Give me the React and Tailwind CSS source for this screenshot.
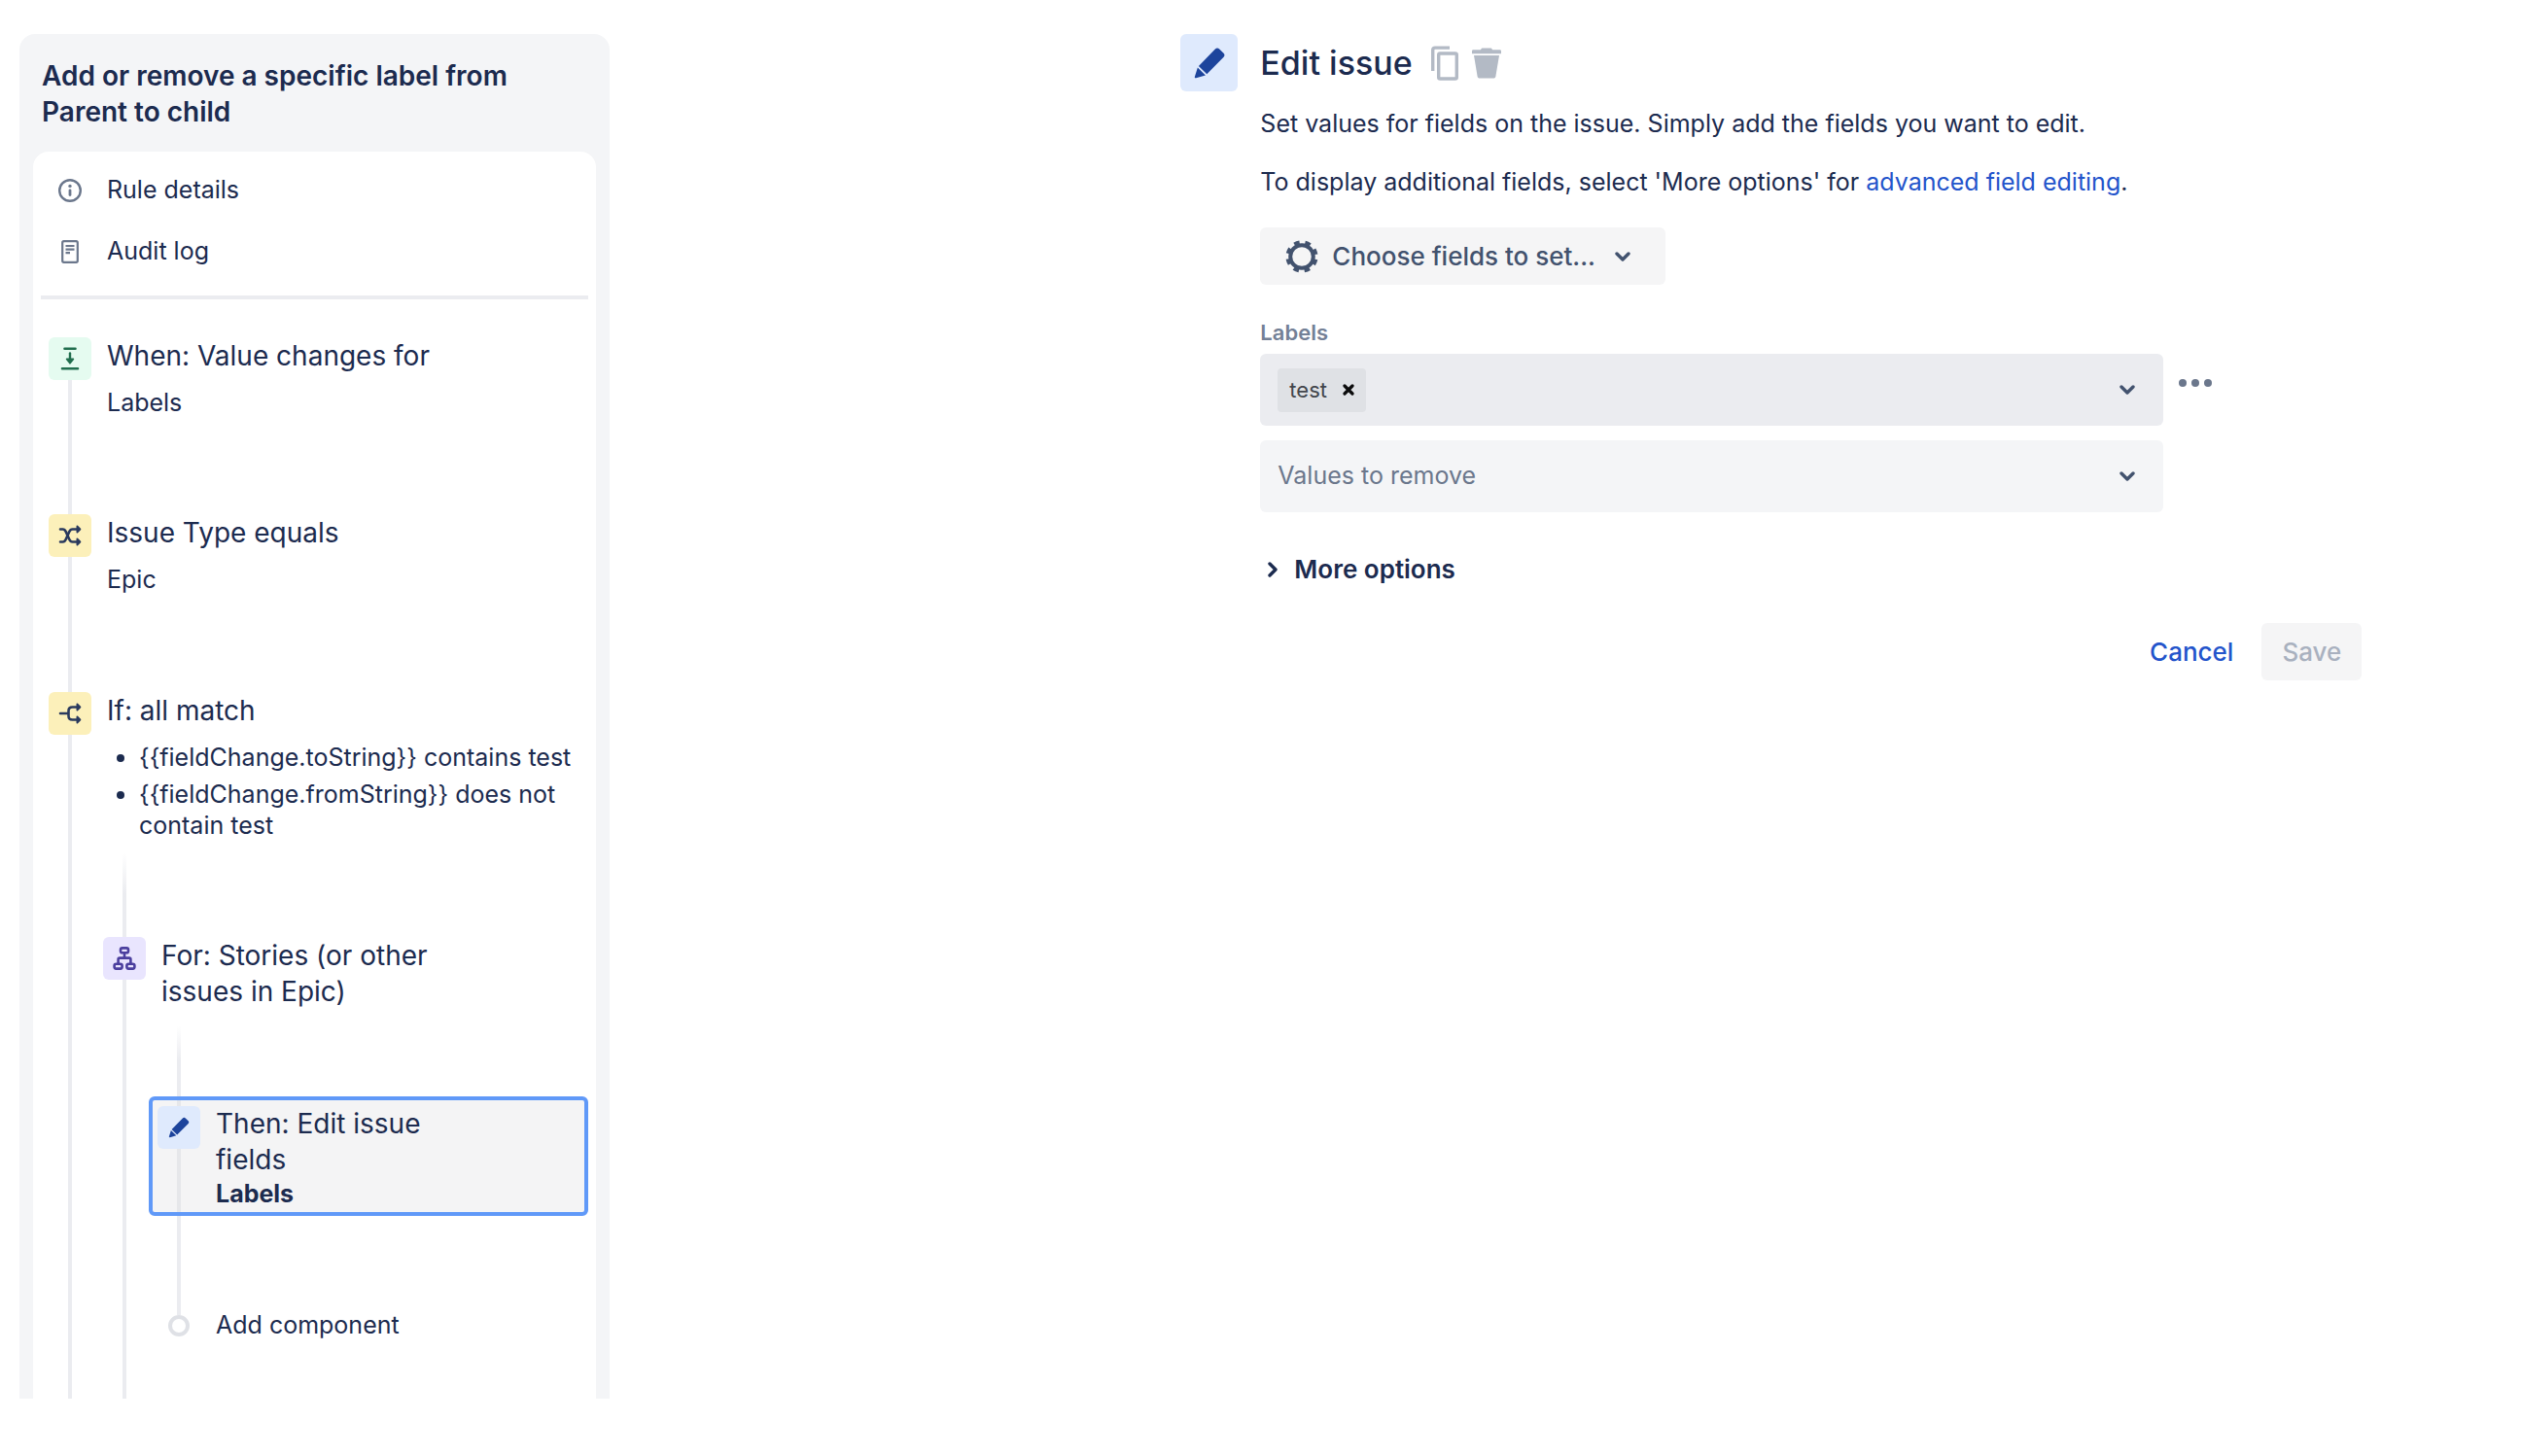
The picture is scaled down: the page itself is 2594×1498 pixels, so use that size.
import React, { useState } from "react";

const icons = {
    trigger: (
        <svg viewBox="0 0 24 24" className="h-6 w-6" fill="none" stroke="#216e4e" strokeWidth="2.6" strokeLinecap="round">
            <path d="M6.5 1.800h11M4 22.200h16" />
            <path d="M12 6.500v8" strokeWidth="2.400" />
            <path d="M8.600 12.400h6.800L12 16.800z" fill="#216e4e" strokeWidth="1.600" strokeLinejoin="round" />
        </svg>
    ),
    condition: (
        <svg viewBox="0 0 24 24" className="h-6 w-6" fill="none" stroke="#2a3a5e" strokeWidth="2.6" strokeLinecap="round" strokeLinejoin="round">
            <path d="M2 5.500h2.600c1.600 0 2.400.8 3.200 2.600l3.400 7.600c.8 1.800 1.600 2.800 3.400 2.800H19" />
            <path d="M2 18.500h2.600c1.600 0 2.400-1 3.200-2.800l3.400-7.600c.8-1.800 1.600-2.600 3.400-2.600H19" />
            <path d="M19.400 2.500l3 3-3 3zM19.400 15.500l3 3-3 3z" fill="#2a3a5e" strokeWidth="1.800" />
        </svg>
    ),
    branch: (
        <svg viewBox="0 0 24 24" className="h-6 w-6" fill="none" stroke="#2a3a5e" strokeWidth="2.6" strokeLinecap="round" strokeLinejoin="round">
            <path d="M2 12h8.500M19 5.500h-4.500c-2.400 0-4 1.400-4 3.800v5.400c0 2.400 1.600 3.800 4 3.800H19" />
            <path d="M19.400 2.500l3 3-3 3zM19.400 15.500l3 3-3 3z" fill="#2a3a5e" strokeWidth="1.800" />
        </svg>
    ),
    hierarchy: (
        <svg viewBox="0 0 24 24" className="h-6 w-6" fill="none" stroke="#4b3f9e" strokeWidth="2.6" strokeLinejoin="round">
            <rect x="8" y="1.400" width="8" height="4.800" rx="1.800" />
            <rect x="1.600" y="17.800" width="8" height="4.800" rx="1.800" />
            <rect x="14.400" y="17.800" width="8" height="4.800" rx="1.800" />
            <path d="M12 6.400v5.200M5.600 17.600v-4.600c0-.8.6-1.400 1.400-1.400h10c.8 0 1.400.6 1.400 1.400v4.600" />
        </svg>
    ),
    pencil: <Pencil className="h-6 w-6" />
}

function Pencil({ className }) {
    return (
        <svg viewBox="0 0 24 24" className={className} fill="#1d449c">
            <path d="M15.900 2.400c.9-.9 2-.9 2.900 0l2.900 2.800c.8.800.8 1.800 0 2.700L10.200 19.500 4.600 14z" />
            <path d="M3.900 15l5.400 5.300-6.500 1.900c-.6.200-1.100-.3-.9-.9z" />
        </svg>
    )
}

const Chevron = ({ className }) => (
    <svg viewBox="0 0 16 10" className={className} fill="none" stroke="currentColor" strokeWidth="3.4" strokeLinecap="round" strokeLinejoin="round">
        <path d="M2 2l6 6 6-6" />
    </svg>
)

const Badge = ({ icon, color }) => (
    <span className={`flex h-11 w-11 shrink-0 items-center justify-center rounded-md ${color}`}>{icons[icon]}</span>
)

// One step of the rule: badge and rail on the left, text and nested steps on the right
const Step = ({ icon, color, title, children }) => (
    <div className="flex gap-3">
        <div className="flex w-11 shrink-0 flex-col items-center">
            <Badge icon={icon} color={color} />
            <span className="w-1 grow bg-[#ebecf0]"></span>
        </div>
        <div className="min-w-0 grow">
            <h3 className="pt-px pr-[100px] pl-1 text-[28px] leading-[37px]">{title}</h3>
            {children}
        </div>
    </div>
)

const Sidebar = () => (
    <aside className="w-[23.6%] min-w-[560px] shrink-0 rounded-t-2xl bg-[#f4f5f7] px-[14px] pt-[25px]">
        <h2 className="px-[9px] text-[28px] leading-[37px] font-semibold">Add or remove a specific label from Parent to child</h2>
        <div className="mt-[22px] rounded-t-2xl bg-white px-2 pt-2">
            <a href="#details" className="flex h-[63px] items-center gap-4 pl-2 text-[25px]">
                <span className="flex w-11 justify-center">
                    <svg viewBox="0 0 24 24" className="h-6 w-6" fill="none" stroke="#6b778c">
                        <circle cx="12" cy="12" r="10.800" strokeWidth="2.400" />
                        <path d="M12 11.800v4.800" strokeWidth="2.800" strokeLinecap="round" />
                        <circle cx="12" cy="7.400" r="1.700" fill="#6b778c" stroke="none" />
                    </svg>
                </span>
                Rule details
            </a>
            <a href="#audit" className="flex h-[63px] items-center gap-4 pl-2 text-[25px]">
                <span className="flex w-11 justify-center">
                    <svg viewBox="0 0 18 24" className="h-6 w-[18px]" fill="none" stroke="#6b778c" strokeWidth="2.2">
                        <rect x="1.200" y="1.200" width="15.600" height="21.600" rx="1.500" />
                        <path d="M4.500 6h9M4.500 9.600h9M4.500 13.200h4.500" />
                    </svg>
                </span>
                Audit log
            </a>
            <hr className="mt-[14px] h-1 border-0 bg-[#ebecf0]" />

            <div className="mt-[39px] pl-2">
                <Step icon="trigger" color="bg-[#e5fbf0]" title="When: Value changes for">
                    <p className="mt-[13px] pb-[99px] pl-1 text-[25px] leading-8">Labels</p>
                </Step>
                <Step icon="condition" color="bg-[#fcf0ba]" title="Issue Type equals">
                    <p className="mt-[13px] pb-[100px] pl-1 text-[25px] leading-8">Epic</p>
                </Step>
                <Step icon="branch" color="bg-[#fcf0ba]" title="If: all match">
                    <ul className="mt-[13px] flex list-disc flex-col gap-[6px] pl-[37px] text-[25px] leading-8">
                        <li>{"{{fieldChange.toString}} contains test"}</li>
                        <li>{"{{fieldChange.fromString}} does not contain test"}</li>
                    </ul>
                    <div className="mt-3 ml-5 h-[87px] w-1 bg-linear-to-b from-white to-[#ebecf0] to-50%"></div>
                    <Step icon="hierarchy" color="bg-[#e9e5fe]" title="For: Stories (or other issues in Epic)">
                        <div className="mt-4 ml-5 h-[73px] w-1 bg-linear-to-b from-white to-[#ebecf0] to-50%"></div>
                        <button type="button" className="-ml-[9px] flex w-[calc(100%+9px)] gap-3 rounded-md border-4 border-[#6099f8] bg-[#f4f4f5] pl-[5px] text-left">
                            <span className="flex w-11 shrink-0 flex-col items-center self-stretch">
                                <span className="h-[6px] w-1 bg-[#e6e7ea]"></span>
                                <Badge icon="pencil" color="bg-[#dfeafd]" />
                                <span className="w-1 grow bg-[#e6e7ea]"></span>
                            </span>
                            <span className="flex flex-col pt-[6px] pr-[100px] pb-[3px] pl-1">
                                <span className="text-[28px] leading-[37px]">Then: Edit issue fields</span>
                                <strong className="text-[25px] leading-8 font-bold">Labels</strong>
                            </span>
                        </button>
                        <div className="ml-5 h-[102px] w-1 bg-[#ebecf0]"></div>
                        <button type="button" className="mb-16 flex h-[22px] items-center gap-4 text-[25px]">
                            <span className="flex w-11 justify-center">
                                <span className="h-[22px] w-[22px] rounded-full border-4 border-[#dfe1e6] bg-white"></span>
                            </span>
                            Add component
                        </button>
                    </Step>
                </Step>
            </div>
        </div>
    </aside>
)

const App = () => {
    const [label, setLabel] = useState("")

    return (
        <div className="flex items-start justify-between bg-white pt-[35px] pl-5 font-['Inter',sans-serif] text-[#1c2b4f]">
            <Sidebar />

            <main className="mr-[6.4%] w-[47.2%]">
                <div className="flex items-center gap-[23px]">
                    <span className="flex h-[59px] w-[59px] items-center justify-center rounded-md bg-[#dfeafd]">
                        <Pencil className="h-9 w-9" />
                    </span>
                    <div className="flex items-center gap-[14px]">
                        <h1 className="mr-[5px] text-[34px] leading-[59px] font-medium">Edit issue</h1>
                        <button type="button" aria-label="Copy">
                            <svg viewBox="0 0 28 36" className="h-9 w-7" fill="none" stroke="#b3bac5" strokeWidth="3.4">
                                <path d="M1.700 26V4.400c0-1.500.8-2.300 2.300-2.300h15" />
                                <rect x="7.700" y="8" width="18.600" height="26" rx="1.600" />
                            </svg>
                        </button>
                        <button type="button" aria-label="Delete">
                            <svg viewBox="0 0 30 32" className="h-8 w-[30px]" fill="#b3bac5">
                                <path d="M1.400 2.200H9C9.400.8 10.200.4 11.400.4h7.200c1.200 0 2 .4 2.400 1.800h7.600c.9 0 1.400.6 1.400 1.400v2.600H0V3.600c0-.8.500-1.400 1.400-1.400z" />
                                <path d="M2 8h26l-3.600 21.400c-.3 1.400-1 2-2.400 2H8c-1.400 0-2.100-.6-2.400-2z" />
                            </svg>
                        </button>
                    </div>
                </div>

                <div className="pl-[82px]">
                    <p className="mt-[15px] text-[25px] leading-9">Set values for fields on the issue. Simply add the fields you want to edit.</p>
                    <p className="mt-6 text-[25px] leading-9">
                        To display additional fields, select 'More options' for <a href="#advanced" className="text-[#2354cb]">advanced field editing</a>.
                    </p>

                    <button type="button" className="mt-[29px] flex h-[59px] items-center rounded-md bg-[#f5f5f6] pr-9 pl-[26px] text-[26px] font-medium text-[#42526e]">
                        <svg viewBox="0 0 34 34" className="mr-[14px] h-[34px] w-[34px]" fill="none" stroke="#42526e">
                            <circle cx="17" cy="17" r="11.800" strokeWidth="4" />
                            <circle cx="17" cy="17" r="14.600" strokeWidth="4" strokeDasharray="5.600 5.867" strokeDashoffset="-3" />
                        </svg>
                        Choose fields to set...
                        <Chevron className="ml-5 h-[10px] w-4" />
                    </button>

                    <label htmlFor="labels" className="mt-[35px] mb-2 block text-[22px] leading-7 font-semibold text-[#738096]">Labels</label>
                    <div className="flex items-start">
                        <div className="flex w-[82%] flex-col gap-[15px]">
                            <div className="flex h-[74px] items-center rounded-md bg-[#ebecf0] pr-[29px] pl-[18px] text-[#42526e]">
                                <span className="flex h-[45px] items-center gap-4 rounded-sm bg-[#dfe1e5] px-3 text-[22px] text-[#42454b]">
                                    test
                                    <button type="button" aria-label="Remove test">
                                        <svg viewBox="0 0 12 12" className="h-3 w-3" fill="none" stroke="#0b0b0c" strokeWidth="3.200" strokeLinecap="round">
                                            <path d="M2 2l8 8M10 2l-8 8" />
                                        </svg>
                                    </button>
                                </span>
                                <input id="labels" value={label} onChange={(e) => setLabel(e.target.value)} className="h-full min-w-0 grow bg-transparent px-2 text-[25px] outline-none" />
                                <Chevron className="h-[10px] w-4" />
                            </div>
                            <div className="grid h-[74px] items-center rounded-md bg-[#f4f5f7] text-[#42526e]">
                                <select aria-label="Values to remove" className="col-start-1 row-start-1 h-full w-full appearance-none bg-transparent pl-[18px] text-[25px] text-[#6b778c]">
                                    <option>Values to remove</option>
                                </select>
                                <Chevron className="pointer-events-none col-start-1 row-start-1 mr-[29px] h-[10px] w-4 justify-self-end" />
                            </div>
                        </div>
                        <button type="button" aria-label="Field actions" className="mt-[26px] ml-4">
                            <svg viewBox="0 0 34 8" className="h-2 w-[34px]" fill="#6b778c">
                                <circle cx="4" cy="4" r="4" />
                                <circle cx="17" cy="4" r="4" />
                                <circle cx="30" cy="4" r="4" />
                            </svg>
                        </button>
                    </div>

                    <button type="button" className="mt-[41px] flex items-center gap-[14px] pl-[5px] text-[26px] leading-9 font-semibold">
                        <Chevron className="h-[10px] w-4 -rotate-90" />
                        More options
                    </button>

                    <div className="mt-[37px] flex justify-end gap-2 text-[26px] font-medium">
                        <button type="button" className="h-[59px] rounded-md px-[21px] text-[#2354cb]">Cancel</button>
                        <button type="button" disabled className="h-[59px] rounded-md bg-[#f5f5f6] px-[21px] text-[#a9b1bf]">Save</button>
                    </div>
                </div>
            </main>
        </div>
    )
}

export default App;
